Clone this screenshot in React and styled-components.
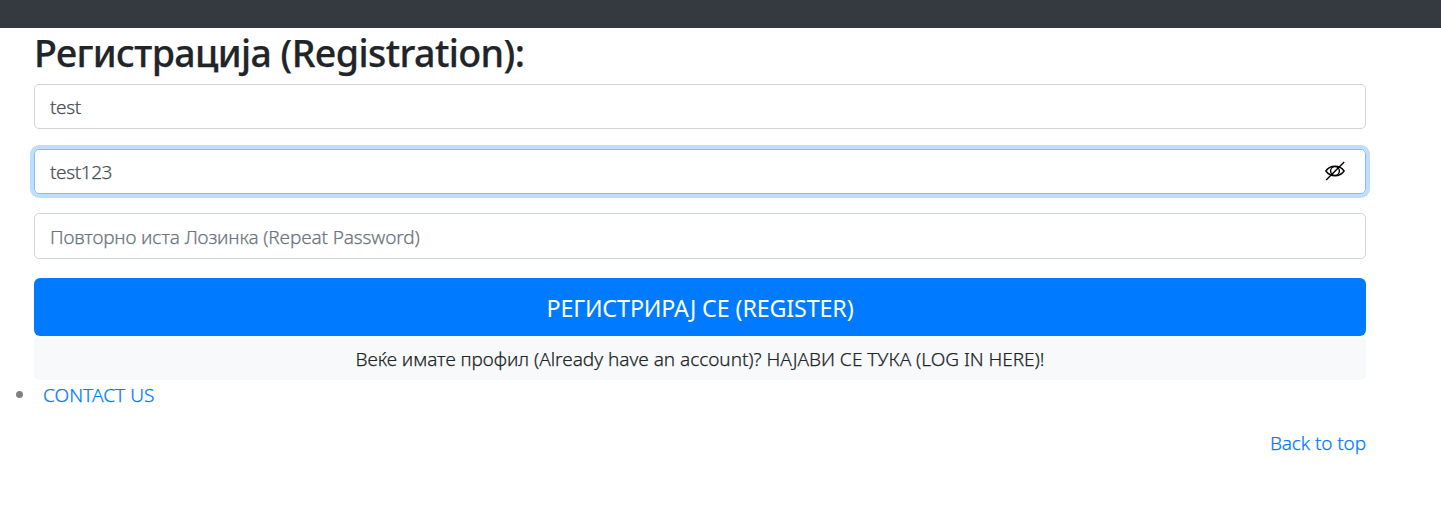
import React from "react";
import styled, { createGlobalStyle } from "styled-components";

const GlobalStyle = createGlobalStyle`
  *, *::before, *::after { box-sizing: border-box; }
  body {
    margin: 0;
    background: #fff;
    color: #212529;
    font-family: "Noto Sans", "Open Sans", sans-serif;
    font-size: 19px;
    font-weight: 300;
    line-height: 29px;
    -webkit-text-stroke: 0.25px currentColor;
  }
`;

const TopBar = styled.header`
  height: 28px;
  background: #343a40;
`;

const Container = styled.main`
  padding: 3px 75px 0 34px;
`;

const Title = styled.h1`
  margin: 0;
  height: 53px;
  font-size: 37.6px;
  font-weight: 500;
  line-height: 43px;
  white-space: nowrap;
`;

const Text = styled.span`
  display: block;
  white-space: nowrap;
  letter-spacing: ${(p) => p.$spacing || 0}px;
`;

const Form = styled.form`
  display: flex;
  flex-direction: column;
`;

const Field = styled.div`
  display: flex;
  align-items: center;
  justify-content: space-between;
  height: ${(p) => p.$height || 45}px;
  margin-bottom: ${(p) => p.$gap || 19}px;
  padding: 2px 20px 0 15px;
  border: 1px solid ${(p) => (p.$focused ? "#80bdff" : "#ced4da")};
  border-radius: 5px;
  box-shadow: ${(p) => (p.$focused ? "0 0 0 4px #bfdeff" : "none")};
  color: ${(p) => (p.$placeholder ? "#6c757d" : "#495057")};
`;

const SubmitButton = styled.button`
  display: flex;
  align-items: center;
  justify-content: center;
  height: 58px;
  padding: 2px 0 0;
  border: 0;
  border-radius: 6px;
  background: #007bff;
  color: #fff;
  font: 400 23.3px/34px "Noto Sans", "Open Sans", sans-serif;
  -webkit-text-stroke: 0;
`;

const LoginLink = styled.a`
  display: flex;
  align-items: center;
  justify-content: center;
  height: 44px;
  padding-top: 2px;
  border-radius: 5px;
  background: #f8f9fa;
  color: #212529;
`;

const Contact = styled.div`
  display: flex;
  align-items: center;
  gap: 20px;
  height: 31px;
  padding-left: 16px;
  color: #007bff;
`;

const Bullet = styled.span`
  width: 7px;
  height: 7px;
  margin-bottom: 2px;
  border-radius: 50%;
  background: #808080;
`;

const Footer = styled.footer`
  display: flex;
  justify-content: flex-end;
  padding: 18px 75px 0 0;
  color: #007bff;
`;

const EyeIcon = styled.svg`
  display: block;
  margin-bottom: 3px;
`;

const HiddenEye = () => (
  <EyeIcon width="20" height="20" viewBox="0 0 20 20" fill="none" stroke="#000" strokeWidth="1.4">
    <path d="M.9 10C3.2 6.7 6.4 5.3 10 5.3S16.8 6.7 19.1 10C16.8 13.3 13.6 14.7 10 14.7S3.2 13.3.9 10Z" />
    <circle cx="10" cy="10" r="4.4" />
    <path d="M1.2 19L19.2 1" />
  </EyeIcon>
);

export default function App() {
  return (
    <>
      <GlobalStyle />
      <TopBar />
      <Container>
        <Title><Text $spacing={-0.6}>Регистрација (Registration):</Text></Title>
        <Form>
          <Field $gap={20}><Text $spacing={-0.4}>test</Text></Field>
          <Field $focused><Text $spacing={-0.4}>test123</Text><HiddenEye /></Field>
          <Field $placeholder $height={46}><Text $spacing={-0.14}>Повторно иста Лозинка (Repeat Password)</Text></Field>
          <SubmitButton type="button"><Text $spacing={-0.15}>РЕГИСТРИРАЈ СЕ (REGISTER)</Text></SubmitButton>
          <LoginLink><Text $spacing={-0.03}>Веќе имате профил (Already have an account)? НАЈАВИ СЕ ТУКА (LOG IN HERE)!</Text></LoginLink>
        </Form>
      </Container>
      <Contact><Bullet /><Text $spacing={0.06}>CONTACT US</Text></Contact>
      <Footer><Text $spacing={-0.1}>Back to top</Text></Footer>
    </>
  );
}
